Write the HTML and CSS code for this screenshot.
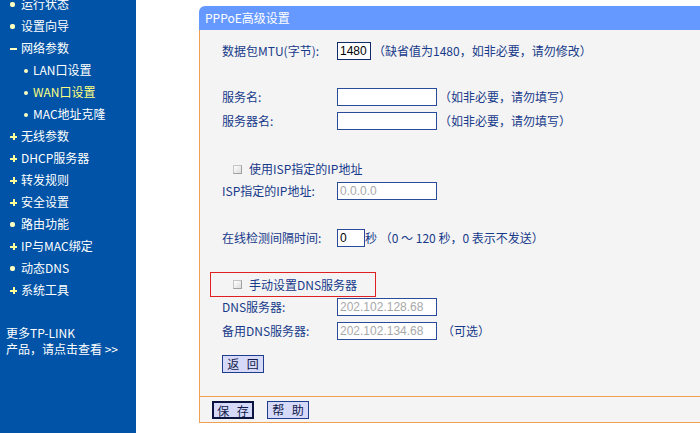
FILE: index.html
```html
<!DOCTYPE html>
<html lang="zh-CN">
<head>
    <meta charset="UTF-8">
    <title>PPPoE高级设置</title>
    <link rel="stylesheet" href="styles.css">
</head>
<body>
    <div class="page">
        <!-- menu a sinistra -->
        <nav class="menu">
            <ul class="menu-list">
                <li class="dot">运行状态</li>
                <li class="dot">设置向导</li>
                <li class="minus">网络参数</li>
                <li class="sub">LAN口设置</li>
                <li class="sub active">WAN口设置</li>
                <li class="sub">MAC地址克隆</li>
                <li class="plus">无线参数</li>
                <li class="plus">DHCP服务器</li>
                <li class="plus">转发规则</li>
                <li class="plus">安全设置</li>
                <li class="dot">路由功能</li>
                <li class="plus">IP与MAC绑定</li>
                <li class="dot">动态DNS</li>
                <li class="plus">系统工具</li>
            </ul>
            <div class="more">更多TP-LINK<br>产品，请点击查看 &gt;&gt;</div>
        </nav>

        <main class="main">
            <div class="panel">
                <div class="panel-title">PPPoE高级设置</div>
                <div class="panel-body">
                    <div class="row r-mtu">
                        <span class="lbl">数据包MTU(字节):</span>
                        <input class="txt w-mtu" value="1480">
                        <span class="hint">（缺省值为1480，如非必要，请勿修改）</span>
                    </div>
                    <div class="row r-svc">
                        <span class="lbl">服务名:</span>
                        <input class="txt">
                        <span class="hint">（如非必要，请勿填写）</span>
                    </div>
                    <div class="row r-gap2">
                        <span class="lbl">服务器名:</span>
                        <input class="txt">
                        <span class="hint">（如非必要，请勿填写）</span>
                    </div>
                    <div class="row check r-isp">
                        <span class="box"></span>使用ISP指定的IP地址
                    </div>
                    <div class="row">
                        <span class="lbl">ISP指定的IP地址:</span>
                        <input class="txt off" value="0.0.0.0" readonly>
                    </div>
                    <div class="row r-time">
                        <span class="lbl">在线检测间隔时间:</span>
                        <input class="txt w-time" value="0">
                        <span class="unit">秒 （0 ～ 120 秒，0 表示不发送）</span>
                    </div>
                    <div class="row check dns-box">
                        <span class="box"></span>手动设置DNS服务器
                    </div>
                    <div class="row">
                        <span class="lbl">DNS服务器:</span>
                        <input class="txt off" value="202.102.128.68" readonly>
                    </div>
                    <div class="row r-gap2">
                        <span class="lbl">备用DNS服务器:</span>
                        <input class="txt off" value="202.102.134.68" readonly>
                        <span class="hint opt">（可选）</span>
                    </div>
                    <div class="row r-back">
                        <button class="btn">返 回</button>
                    </div>
                </div>
                <div class="panel-foot">
                    <button class="btn btn-default">保 存</button>
                    <button class="btn">帮 助</button>
                </div>
            </div>
        </main>
    </div>
</body>
</html>
```

FILE: styles.css
```css
body {
    margin: 0;
    font-family: "Noto Sans CJK SC", sans-serif;
    font-size: 12px;
    line-height: 22px;
    background-color: #fff;
    overflow: hidden;
}
.page {
    display: flex;
    height: 433px;
}

/* menu */
.menu {
    width: 136px;
    flex: none;
    background-color: #0053a6;
    color: #fff;
    overflow: hidden;
}
.menu-list {
    list-style: none;
    margin: -7px 0 0;
    padding: 0;
}
.menu-list li {
    height: 22px;
    line-height: 22px;
    padding-left: 10px;
    white-space: nowrap;
}
.menu-list li::before {
    content: "";
    display: inline-block;
    vertical-align: middle;
    margin: -2px 5px 0 0;
}
.menu-list .dot::before {
    width: 5px;
    height: 5px;
    margin-right: 6px;
    border-radius: 2px;
    background-color: #ffffc0;
}
.menu-list .plus::before {
    width: 7px;
    height: 7px;
    margin-right: 4px;
    background:
        linear-gradient(#ffff99, #ffff99) center / 7px 2px no-repeat,
        linear-gradient(#ffff99, #ffff99) center / 2px 7px no-repeat;
}
.menu-list .minus::before {
    width: 7px;
    height: 2px;
    margin-right: 4px;
    background-color: #ffffc0;
}
.menu-list .sub {
    padding-left: 24px;
}
.menu-list .sub::before {
    width: 4px;
    height: 4px;
    border-radius: 2px;
    background-color: #ffffc0;
}
.menu-list .active {
    color: #ffff80;
}
.more {
    margin-top: 24px;
    padding-left: 6px;
    line-height: 16px;
    white-space: nowrap;
}

/* pannello */
.main {
    flex: 1;
    padding: 6px 0 0 63px;
    overflow: hidden;
}
.panel {
    width: 560px;
    color: #173a8a;
}
.panel-title {
    height: 24px;
    line-height: 24px;
    padding-left: 6px;
    background-color: #6699ff;
    border-top-left-radius: 6px;
    color: #fff;
}
.panel-body {
    background-color: #f4f4f4;
    border-left: 1px solid #f0a050;
    padding: 10px 0 21px 22px;
}
.row {
    display: flex;
    align-items: center;
    height: 22px;
    white-space: nowrap;
}
.lbl {
    width: 115px;
    flex: none;
}
.txt {
    box-sizing: border-box;
    width: 100px;
    height: 18px;
    margin: 0;
    padding: 0 2px;
    border: 1px solid #2a4a9a;
    background-color: #fff;
    font-family: "Liberation Sans", sans-serif;
    font-size: 12px;
    color: #000;
    outline: none;
}
.txt.off {
    color: #a8a8a8;
}
.w-mtu {
    width: 34px;
    border-color: #102a6a;
}
.w-time {
    width: 28px;
}
.hint {
    margin-left: 2px;
}
.opt {
    margin-left: 5px;
}
.r-svc {
    margin-top: 24px;
}
.r-gap2 {
    margin-top: 2px;
}
.r-isp {
    margin-top: 26px;
}
.r-time {
    margin-top: 25px;
}
.r-back {
    margin-top: 11px;
}
.check {
    padding-left: 11px;
}
.box {
    box-sizing: border-box;
    width: 9px;
    height: 9px;
    margin-right: 7px;
    border: 1px solid #c4c4c4;
    border-right-color: #a0a0a0;
    border-bottom-color: #a0a0a0;
    background: linear-gradient(135deg, #ffffff, #dcdcdc);
}
.dns-box {
    box-sizing: border-box;
    width: 166px;
    height: 25px;
    margin: 23px 0 -1px -12px;
    padding-left: 22px;
    border: 1px solid #e02020;
}
.btn {
    box-sizing: border-box;
    width: 42px;
    height: 18px;
    padding: 0;
    border: 1px solid #1e3c8c;
    background-color: #d6daf8;
    font-family: "Noto Sans CJK SC", sans-serif;
    font-size: 12px;
    line-height: 16px;
    word-spacing: 5px;
    color: #10184a;
}
.btn-default {
    border: 2px solid #0c1440;
}
.panel-foot {
    display: flex;
    align-items: center;
    gap: 13px;
    height: 25px;
    padding-left: 12px;
    background-color: #f4f4f4;
    border-left: 1px solid #f0a050;
    border-top: 1px solid #f0a050;
    border-bottom: 1px solid #f0a050;
}
```
